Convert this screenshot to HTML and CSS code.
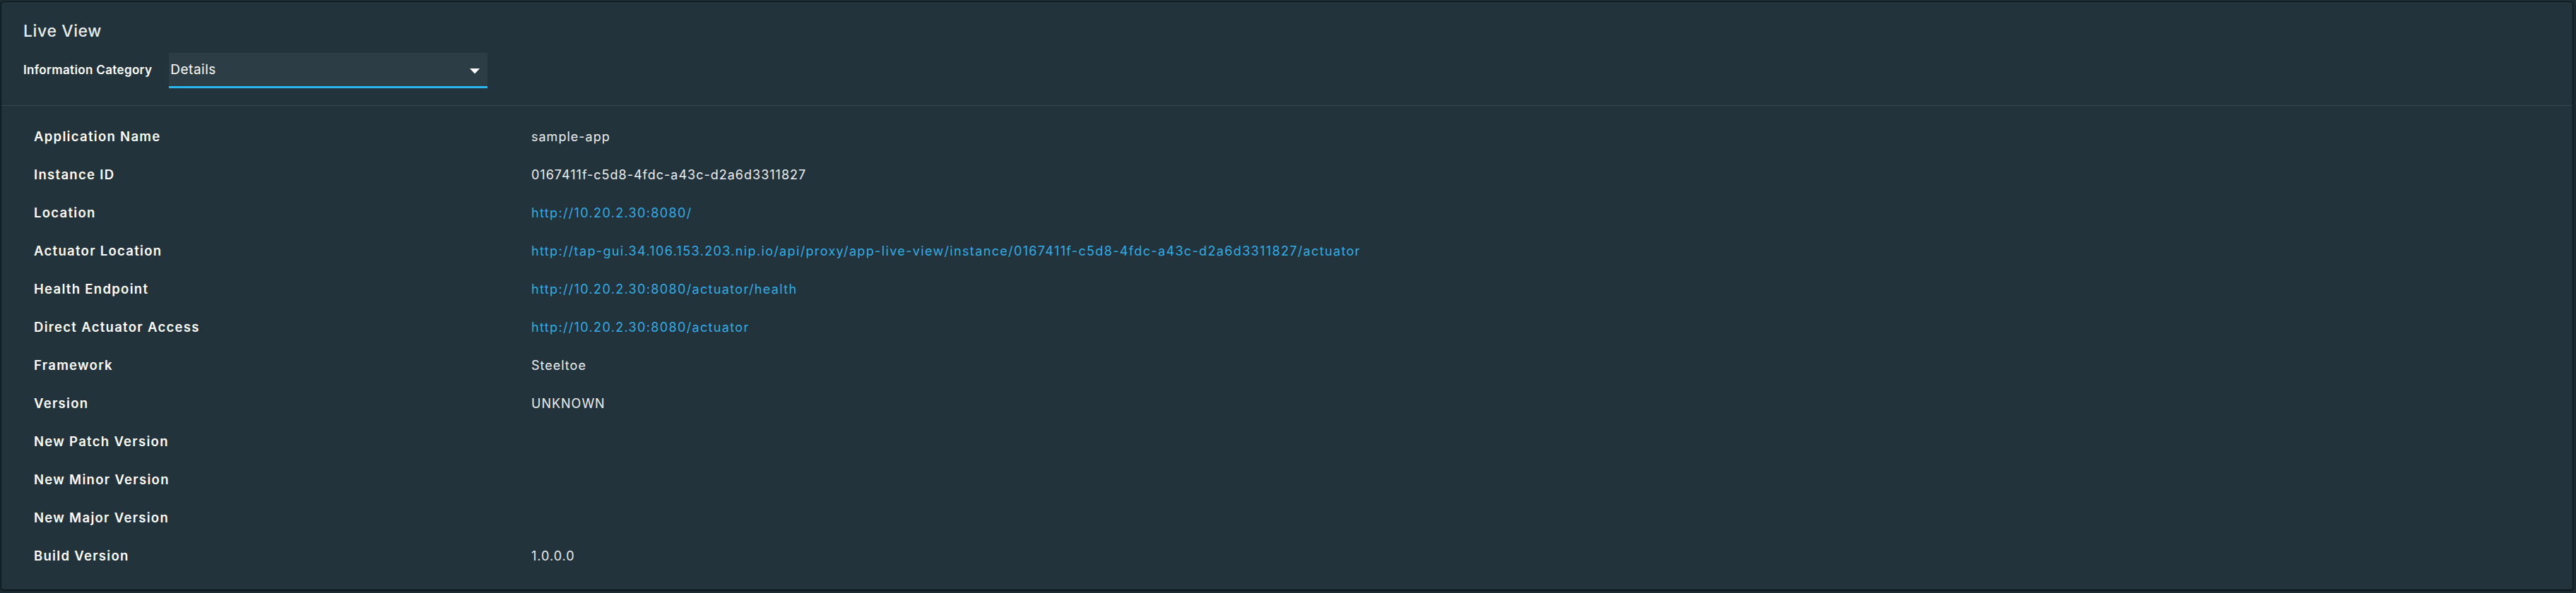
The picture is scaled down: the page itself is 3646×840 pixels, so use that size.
FILE: index.html
```html
<!DOCTYPE html>
<html lang="en">
<head>
<meta charset="utf-8">
<title>Live View</title>
<link rel="stylesheet" href="styles.css">
</head>
<body>
<div class="card">
  <div class="header">
    <h2 class="title">Live View</h2>
    <div class="filter">
      <span class="filter-label">Information Category</span>
      <div class="select">
        <span class="select-value">Details</span>
        <svg class="caret" width="14" height="8" viewBox="0 0 14 8"><path d="M0 0 L14 0 L7 7.5 Z" fill="#ffffff"/></svg>
      </div>
    </div>
  </div>
  <div class="details">
    <div class="row"><div class="key">Application Name</div><div class="val">sample-app</div></div>
    <div class="row"><div class="key">Instance ID</div><div class="val">0167411f-c5d8-4fdc-a43c-d2a6d3311827</div></div>
    <div class="row"><div class="key">Location</div><div class="val"><a class="link" href="#">http://10.20.2.30:8080/</a></div></div>
    <div class="row"><div class="key">Actuator Location</div><div class="val"><a class="link" href="#">http://tap-gui.34.106.153.203.nip.io/api/proxy/app-live-view/instance/0167411f-c5d8-4fdc-a43c-d2a6d3311827/actuator</a></div></div>
    <div class="row"><div class="key">Health Endpoint</div><div class="val"><a class="link" href="#">http://10.20.2.30:8080/actuator/health</a></div></div>
    <div class="row"><div class="key">Direct Actuator Access</div><div class="val"><a class="link" href="#">http://10.20.2.30:8080/actuator</a></div></div>
    <div class="row"><div class="key">Framework</div><div class="val">Steeltoe</div></div>
    <div class="row"><div class="key">Version</div><div class="val">UNKNOWN</div></div>
    <div class="row"><div class="key">New Patch Version</div><div class="val"></div></div>
    <div class="row"><div class="key">New Minor Version</div><div class="val"></div></div>
    <div class="row"><div class="key">New Major Version</div><div class="val"></div></div>
    <div class="row"><div class="key">Build Version</div><div class="val">1.0.0.0</div></div>
  </div>
</div>
</body>
</html>
```

FILE: styles.css
```css
html, body {
  margin: 0;
  background: #1c2b32;
}
body {
  padding: 2px 4px 2px 1px;
  font-family: Inter, "Noto Sans", sans-serif;
  color: #eef1f3;
}
.card {
  background: #22333b;
  border: 1px solid #0b1519;
  border-radius: 4px;
  box-shadow: 0 1px 2px rgba(0,0,0,0.5);
}
.header {
  padding: 27px 31px 24px;
  border-bottom: 1px solid #34474f;
}
.title {
  margin: 0;
  font-size: 23px;
  line-height: 28px;
  font-weight: 500;
  letter-spacing: 0.6px;
  color: #e8edf0;
}
.filter {
  margin-top: 17px;
  display: flex;
  align-items: center;
  gap: 24px;
}
.filter-label {
  font-size: 17px;
  font-weight: 600;
  letter-spacing: 0.35px;
  color: #ffffff;
  margin-top: -3px;
}
.select {
  width: 451px;
  height: 50px;
  box-sizing: border-box;
  background: #2c3d46;
  border-bottom: 3px solid #29b6ef;
  display: flex;
  align-items: center;
  justify-content: space-between;
  padding-left: 2px;
  padding-right: 11px;
}
.select-value {
  font-size: 19px;
  font-weight: 400;
  letter-spacing: 0.5px;
  color: #ffffff;
  margin-top: -1px;
}
.caret {
  display: block;
  margin-top: 4px;
}
.details {
  padding: 16px 0 21px 46px;
}
.row {
  display: grid;
  grid-template-columns: 704px 1fr;
  height: 54px;
  align-items: center;
  font-size: 18px;
}
.key {
  font-size: 18.5px;
  font-weight: 600;
  letter-spacing: 1.3px;
  color: #ffffff;
}
.val {
  font-weight: 400;
  letter-spacing: 1px;
  color: #eceff1;
}
.link {
  color: #33ade6;
  letter-spacing: 1.35px;
  text-decoration: none;
}
```
